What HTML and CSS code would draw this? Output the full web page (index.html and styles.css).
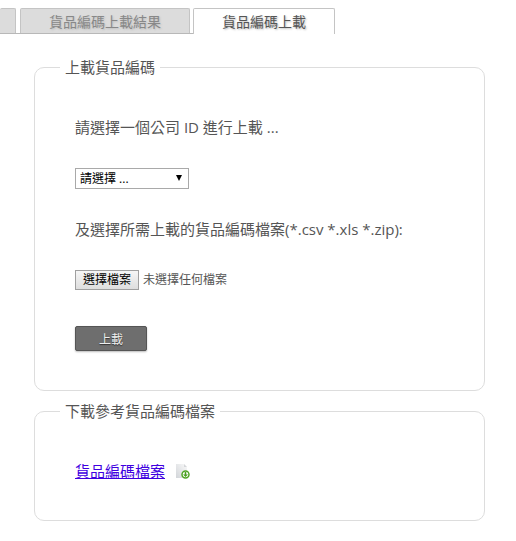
FILE: index.html
```html
<!DOCTYPE html>
<html lang="zh-Hant">
<head>
    <meta charset="UTF-8">
    <meta name="viewport" content="width=device-width, initial-scale=1.0">
    <title>貨品編碼上載</title>
    <link rel="stylesheet" href="styles.css">
</head>
<body>
    <nav class="tabs">
        <div class="tabs-inactive">
            <a href="#" class="tab tab-cut" aria-label="上一頁"></a>
            <a href="#" class="tab">貨品編碼上載結果</a>
        </div>
        <a href="#" class="tab tab-active">貨品編碼上載</a>
    </nav>
    <main class="content">
        <form>
            <fieldset>
                <legend>上載貨品編碼</legend>
                <div class="fields">
                    <label for="company">請選擇一個公司 ID 進行上載 ...</label>
                    <div class="field-row">
                        <div class="select-box">
                            <select id="company">
                                <option>請選擇 ...</option>
                            </select>
                            <svg class="select-arrow" viewBox="0 0 6 6" aria-hidden="true">
                                <path d="M0 0H6L3 6Z"/>
                            </svg>
                        </div>
                    </div>
                    <label for="code-file">及選擇所需上載的貨品編碼檔案(*.csv *.xls *.zip):</label>
                    <div class="field-row">
                        <input type="file" id="code-file" class="file-input" accept=".csv,.xls,.zip">
                        <label for="code-file" class="file-button">選擇檔案</label>
                        <span>未選擇任何檔案</span>
                    </div>
                    <button type="submit" class="upload-button">上載</button>
                </div>
            </fieldset>
        </form>
        <fieldset>
            <legend>下載參考貨品編碼檔案</legend>
            <div class="download">
                <a href="#">貨品編碼檔案</a>
                <svg class="download-icon" viewBox="0 0 16 16" aria-hidden="true">
                    <defs>
                        <linearGradient id="page" x1="0" y1="1" x2="1" y2="0">
                            <stop offset="0" stop-color="#d2d5d9"/>
                            <stop offset="1" stop-color="#fafafa"/>
                        </linearGradient>
                    </defs>
                    <path d="M1 1H9L12 4V15H1Z" fill="url(#page)"/>
                    <path d="M9 1V4H12Z" fill="#d5d7da"/>
                    <circle cx="10.500" cy="11.500" r="3.500" fill="#fff" stroke="#4fa524" stroke-width="1.500"/>
                    <path d="M9.700 9H11.300V11.400H13L10.500 14L8 11.400H9.700Z" fill="#4b9e22"/>
                </svg>
            </div>
        </fieldset>
    </main>
</body>
</html>
```
FILE: styles.css
```css
:root {
    --color-text: #555;
    --color-border: #ddd;
    --color-tab: #dcdcdc;
    --color-tab-border: #c4c4c4;
    --color-button: #6e6e6e;
}

* {
    padding: 0;
    margin: 0;
    box-sizing: border-box;
}

body {
    background-color: #fff;
    color: var(--color-text);
    font-family: "Open Sans", "Noto Sans CJK TC", sans-serif;
    font-size: 15px;
    line-height: 20px;
}

.tabs {
    display: flex;
    padding-top: 8px;
}

.tabs-inactive {
    display: flex;
    gap: 4px;
    height: 26px;
    padding-right: 3px;
    border-bottom: 1px solid #b8b8b8;
}

.tab {
    height: 25px;
    padding: 0 28px;
    border: 1px solid var(--color-tab-border);
    border-bottom: none;
    border-radius: 2px 2px 0 0;
    background-color: var(--color-tab);
    color: #888;
    font-size: 14px;
    line-height: 26px;
    text-decoration: none;
    text-shadow: 1px 1px 2px #bbb;
    white-space: nowrap;
}

.tab-cut {
    width: 16px;
    padding: 0;
    border-left: none;
}

.tab-active {
    height: 26px;
    background-color: #fff;
    color: var(--color-text);
}

.content {
    padding: 23px 31px 20px 34px;
}

fieldset {
    min-width: 0;
    margin-bottom: 10px;
    padding: 40px 40px 39px;
    border: 1px solid var(--color-border);
    border-radius: 10px;
}

legend {
    margin-left: -15px;
    padding: 0 5px;
}

.fields {
    display: flex;
    flex-direction: column;
    align-items: flex-start;
    gap: 30px;
}

.field-row {
    position: relative;
    display: flex;
    align-items: center;
    gap: 4px;
    height: 22px;
    font-size: 12px;
}

.select-box {
    position: relative;
}

select {
    display: block;
    width: 114px;
    height: 21px;
    padding: 0 20px 0 4px;
    border: 1px solid #a9a9a9;
    border-radius: 0;
    appearance: none;
    background-color: #fff;
    color: #000;
    font: 400 12px "Open Sans", "Noto Sans CJK TC", sans-serif;
}

.select-arrow {
    position: absolute;
    top: 7px;
    right: 7px;
    width: 6px;
    height: 6px;
    pointer-events: none;
}

.file-input {
    position: absolute;
    width: 1px;
    height: 1px;
    opacity: 0;
}

.file-button {
    height: 20px;
    padding: 0 7px;
    border: 1px solid #a0a0a0;
    background: linear-gradient(#f6f6f6, #dedede);
    color: #000;
    line-height: 18px;
    cursor: pointer;
}

.upload-button {
    width: 72px;
    height: 25px;
    margin-top: 5px;
    border: 1px solid #555;
    border-radius: 2px;
    background-color: var(--color-button);
    box-shadow: 0 1px 2px #bbb;
    color: #eee;
    font: 400 12px "Open Sans", "Noto Sans CJK TC", sans-serif;
    text-shadow: 0 1px 1px #333;
    cursor: pointer;
}

.upload-button:hover {
    background-color: #555;
}

.download {
    display: flex;
    align-items: center;
    gap: 10px;
}

.download a {
    color: #4000e0;
}

.download-icon {
    width: 16px;
    height: 16px;
}
```
